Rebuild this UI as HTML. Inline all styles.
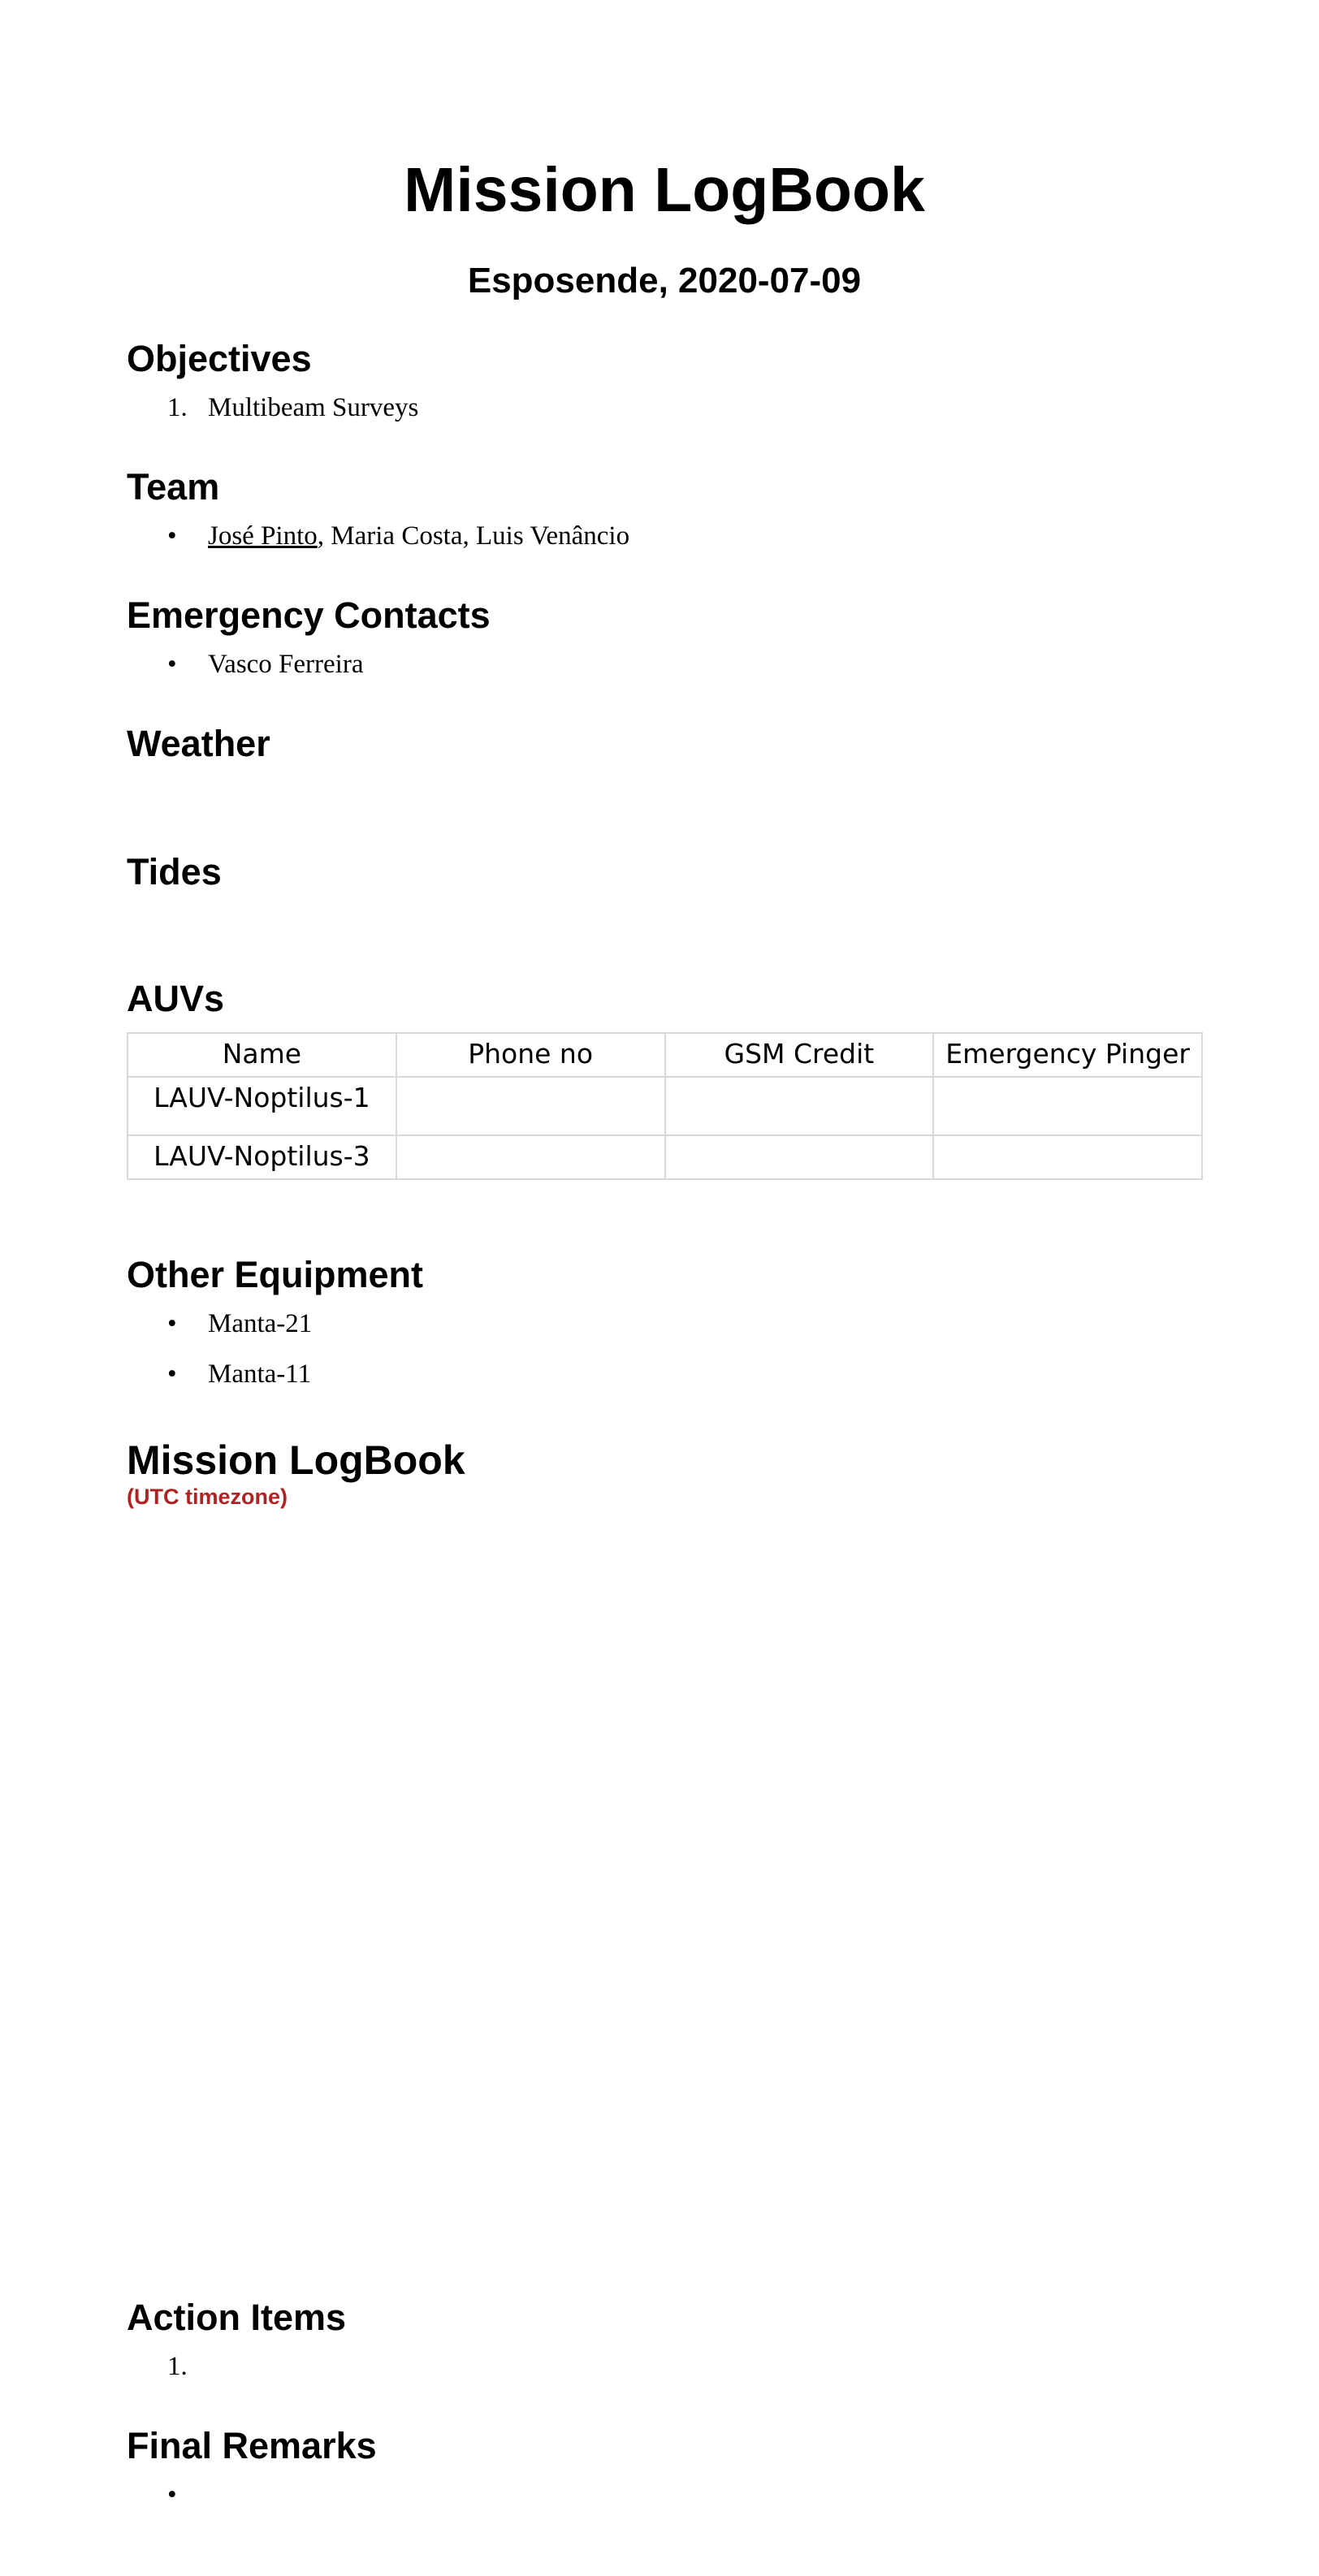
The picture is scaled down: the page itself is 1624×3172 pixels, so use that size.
<!DOCTYPE html>
<html><head><meta charset="utf-8"><style>
body{margin:0;width:1624px;height:3172px;background:#fff;position:relative;overflow:hidden;color:#000}
.a{position:absolute;white-space:nowrap}
.h{font-family:"Liberation Sans",sans-serif;font-weight:bold;font-size:45px;left:156px;height:60px;line-height:60px}
.t{font-family:"Liberation Serif",serif;font-size:33px;height:44px;line-height:44px}
table{position:absolute;left:156px;top:1271px;width:1325px;border-collapse:collapse;font-family:"DejaVu Sans",sans-serif;font-size:33px;table-layout:fixed}
td{border:2px solid #d8d8d8;text-align:center;vertical-align:top;padding:0;line-height:50px}
</style></head><body>
<div class="a" style="left:0;width:1636px;text-align:center;top:188px;line-height:92px;font-family:'Liberation Sans',sans-serif;font-weight:bold;font-size:77px">Mission LogBook</div>
<div class="a" style="left:0;width:1636px;text-align:center;top:318px;line-height:56px;font-family:'Liberation Sans',sans-serif;font-weight:bold;font-size:44px">Esposende, 2020-07-09</div>

<div class="a h" style="top:412px">Objectives</div>
<div class="a t" style="left:206px;top:480px">1.</div><div class="a t" style="left:256px;top:480px">Multibeam Surveys</div>

<div class="a h" style="top:570px">Team</div>
<div class="a t" style="left:206px;top:638px">•</div><div class="a t" style="left:256px;top:638px"><u>José Pinto</u>, Maria Costa, Luis Venâncio</div>

<div class="a h" style="top:728px">Emergency Contacts</div>
<div class="a t" style="left:206px;top:796px">•</div><div class="a t" style="left:256px;top:796px">Vasco Ferreira</div>

<div class="a h" style="top:886px">Weather</div>
<div class="a h" style="top:1044px">Tides</div>
<div class="a h" style="top:1200px">AUVs</div>

<table>
<tr style="height:54px"><td>Name</td><td>Phone no</td><td>GSM Credit</td><td>Emergency Pinger</td></tr>
<tr style="height:72px"><td>LAUV-Noptilus-1</td><td></td><td></td><td></td></tr>
<tr style="height:54px"><td>LAUV-Noptilus-3</td><td></td><td></td><td></td></tr>
</table>

<div class="a h" style="top:1540px">Other Equipment</div>
<div class="a t" style="left:206px;top:1608px">•</div><div class="a t" style="left:256px;top:1608px">Manta-21</div>
<div class="a t" style="left:206px;top:1670px">•</div><div class="a t" style="left:256px;top:1670px">Manta-11</div>

<div class="a" style="left:156px;top:1766px;line-height:64px;font-family:'Liberation Sans',sans-serif;font-weight:bold;font-size:50px">Mission LogBook</div>
<div class="a" style="left:156px;top:1826px;line-height:34px;font-family:'Liberation Sans',sans-serif;font-weight:bold;font-size:27px;color:#b22222">(UTC timezone)</div>

<div class="a h" style="top:2824px">Action Items</div>
<div class="a t" style="left:206px;top:2892px">1.</div>

<div class="a h" style="top:2982px">Final Remarks</div>
<div class="a t" style="left:206px;top:3050px">•</div>
</body></html>
